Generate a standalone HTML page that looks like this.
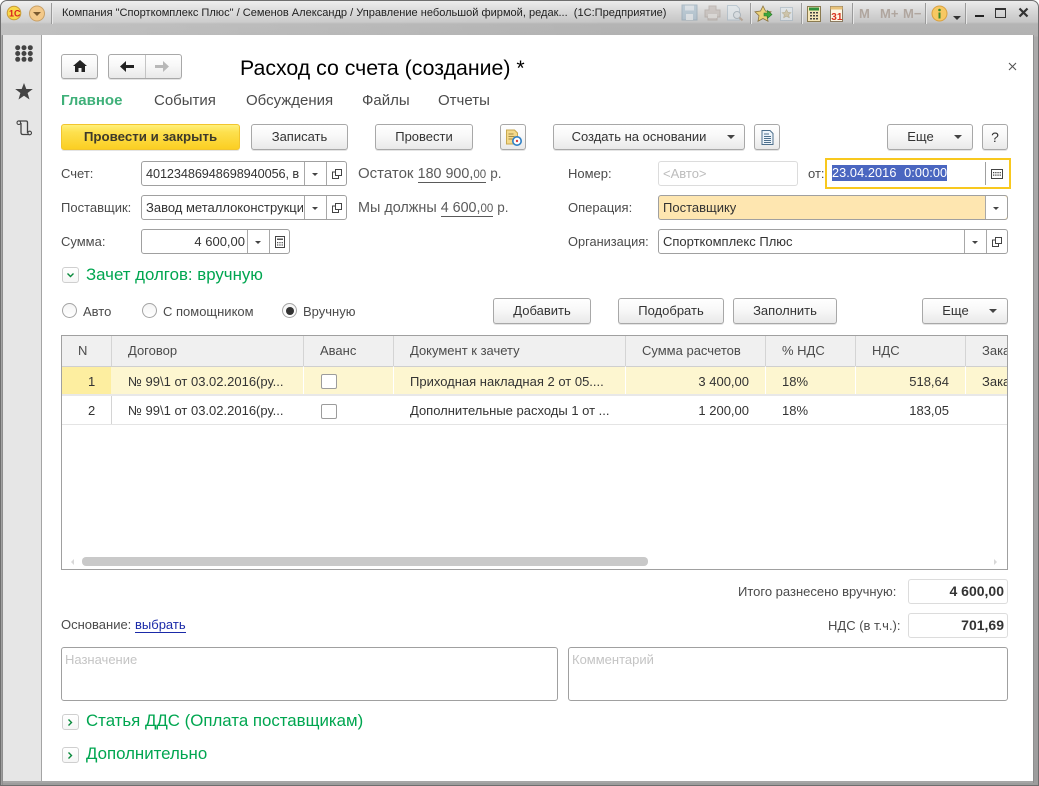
<!DOCTYPE html>
<html lang="ru"><head><meta charset="utf-8"><title>Расход со счета (создание)</title>
<style>
html,body{margin:0;padding:0;background:#fff}
body{width:1039px;height:786px;position:relative;overflow:hidden;font-family:"Liberation Sans",Arial,sans-serif;font-size:13px;color:#333}
div,span.a,a.a{position:absolute;box-sizing:border-box}
svg{position:absolute;overflow:visible}
.t{white-space:nowrap;height:20px;line-height:20px}
.l{color:#4b4b4b}
.b{border:1px solid #a8a8a8;border-radius:3px;background:linear-gradient(#fff 0%,#f8f8f8 45%,#e9e9e9 100%);text-align:center;color:#333;line-height:24px;white-space:nowrap;box-shadow:0 1px 0 #e4e4e4}
.f{border:1px solid #a0a0a0;border-radius:3px;background:#fff;height:25px}
.d{width:1px;top:0;bottom:0;background:#a8a8a8}
.arr{width:0;height:0;border-left:3px solid transparent;border-right:3px solid transparent;border-top:3px solid #444}
.arr2{width:0;height:0;border-left:4px solid transparent;border-right:4px solid transparent;border-top:4px solid #444}
.v{left:4px;top:2px;line-height:20px;white-space:nowrap;overflow:hidden;color:#333}
.g{color:#00a650;font-size:16.850px;height:22px;line-height:22px;white-space:nowrap}
.ex{left:62px;width:17px;height:16px;border:1px solid #cfcfcf;border-radius:3px;background:linear-gradient(#fff,#f6f6f6)}
.r{width:15px;height:15px;border:1px solid #a4a4a4;border-radius:50%;background:linear-gradient(#f4f4f4,#fff)}
.th{top:336px;height:30px;line-height:30px;color:#4b4b4b;white-space:nowrap}
.td{height:20px;line-height:20px;white-space:nowrap;color:#333}
.s{width:1px;background:#d4d4d4}
.cb{width:16px;height:15px;border:1px solid #9c9c9c;border-radius:2px;background:#fff}
.mt{color:#b0a69f;font-weight:bold;font-size:13px;top:5px;height:18px;line-height:18px;white-space:nowrap}
.sp{width:1px;height:21px;top:3px;background:#9a9a9a;box-shadow:1px 0 0 #e8e8e8}
.tb{top:91px;font-size:15px;color:#4b4b4b}
</style></head><body>
<svg width="0" height="0" style="position:absolute"><defs>
<symbol id="open" viewBox="0 0 12 12"><path d="M4.500 1.500h6v6h-6zM4.500 4H1.500v6.500h6V7.500" fill="none" stroke="#444" stroke-width="1"/></symbol>
<symbol id="calc" viewBox="0 0 12 12"><path d="M1.500 .5h9v11h-9z" fill="#fff" stroke="#444"/><path d="M3 2.500h6v1.500H3z" fill="#555"/><path d="M3 6h1.300v1.200H3zM5.300 6h1.300v1.200H5.300zM7.600 6h1.300v1.200H7.600zM3 8.400h1.300v1.200H3zM5.300 8.400h1.300v1.200H5.300zM7.600 8.400h1.300v1.200H7.600z" fill="#555"/></symbol>
</defs></svg>

<!-- window frame -->
<div style="left:0;top:0;width:1039px;height:786px;border:1px solid #6e6e6e;border-radius:7px 7px 0 0;background:linear-gradient(#ececec 0,#d8d8d8 10px,#c6c6c6 21px,#b4b4b4 23px,#b2b2b2 35px,#aaa 36px,#9d9d9d 100%)"></div>
<div style="left:1px;top:1px;width:1037px;height:34px;border-radius:6px 6px 0 0;background:linear-gradient(90deg,rgba(255,255,255,.18),rgba(255,255,255,0) 60%)"></div>
<div style="left:3px;top:35px;width:38px;height:746px;background:#e6e6e6"></div>
<div style="left:41px;top:35px;width:1px;height:746px;background:#a4a4a4"></div>
<div style="left:42px;top:35px;width:991px;height:746px;background:#fff"></div>
<div style="left:3px;top:781px;width:1030px;height:2px;background:#a6a6a6"></div>
<div style="left:2px;top:35px;width:1px;height:750px;background:#8e8e8e"></div>
<div style="left:1033px;top:35px;width:1px;height:748px;background:#8e8e8e"></div>

<!-- title bar -->
<svg style="left:7px;top:3px" width="22" height="22" viewBox="0 0 22 22"><circle cx="7" cy="10" r="6.800" fill="#f8d84a" stroke="#c79a3a"/><text x="2" y="13.500" font-family="Liberation Sans" font-weight="bold" font-size="9" fill="#d82020">1С</text></svg>
<svg style="left:29px;top:6px" width="18" height="18" viewBox="0 0 18 18"><circle cx="8" cy="7.500" r="7.500" fill="#f3c98a" stroke="#c8a066"/><path d="M4 6h8L8 10z" fill="#7a5a30"/></svg>
<div class="sp" style="left:51px"></div>
<div class="t" style="left:62px;top:3px;font-size:11.060px;color:#222">Компания "Спорткомплекс Плюс" / Семенов Александр / Управление небольшой фирмой, редак...&nbsp; (1С:Предприятие)</div>

<svg style="left:680px;top:3px" width="170" height="19" viewBox="0 0 170 19">
<g opacity=".55">
<path d="M2 2h15v15H2z" fill="#9fb9cc" stroke="#7e98ac"/><path d="M5 2.500h9v5H5z" fill="#d8e2ea"/><path d="M6 11h7v6H6z" fill="#e4ebf0"/>
<path d="M25 7h4V3h7v4h4v7h-3v3H28v-3h-3z" fill="#c0b6b0" stroke="#a49890"/><path d="M28 11h9v4h-9z" fill="#e0dcd8"/>
<path d="M47.500 2.500h9l3 3V17h-12z" fill="#e4ecf2" stroke="#9fb4c4"/><circle cx="57" cy="12" r="3.500" fill="#dce4ea" stroke="#8a9aa6"/><path d="M59.500 14.500l3 3" stroke="#a58a70" stroke-width="2"/>
<path d="M100.500 4.500h12v13h-12z" fill="#e4ecf2" stroke="#a0b2c0"/><path d="M106.500 6.500l1.400 2.800 3 .4-2.200 2 .6 3-2.800-1.500-2.800 1.500.6-3-2.200-2 3-.4z" fill="#c8b88a" stroke="#a09060" stroke-width=".6"/>
</g>
<path d="M83 3l2.500 5 5.500.8-4 3.900 1 5.500-5-2.700-5 2.700 1-5.500-4-3.900 5.500-.8z" fill="#ecd27a" stroke="#8a7440" stroke-width=".8"/>
<path d="M84 10h3.500V7.500l4.500 4-4.500 4V13H84z" fill="#3fa83c" stroke="#2a7a2a" stroke-width=".6"/>
<path d="M127.500 3.500h13v15h-13z" fill="#f5e6b8" stroke="#8a7a50"/><path d="M129 4.500h10v3h-10z" fill="#2f8f3a"/><path d="M130 9h2v1.500h-2zM133 9h2v1.500h-2zM136 9h2v1.500h-2zM130 12h2v1.500h-2zM133 12h2v1.500h-2zM136 12h2v1.500h-2zM130 15h2v1.500h-2zM133 15h2v1.500h-2zM136 15h2v1.500h-2z" fill="#444"/>
<path d="M150.500 3.500h12v15h-12z" fill="#fdf6e4" stroke="#8a7a60"/><path d="M150.500 3.500h12v3h-12z" fill="#e8c27a"/><text x="151.300" y="17" font-family="Liberation Sans" font-size="10" font-weight="bold" fill="#d8321e">31</text>
</svg>
<div class="sp" style="left:750px"></div>
<div class="sp" style="left:801px"></div>
<div class="sp" style="left:852px"></div>
<div class="sp" style="left:925px"></div>
<div class="sp" style="left:965px"></div>
<div class="mt" style="left:859px">M</div>
<div class="mt" style="left:880px">M+</div>
<div class="mt" style="left:903px">M−</div>
<svg style="left:931px;top:5px" width="18" height="18" viewBox="0 0 18 18"><circle cx="8.500" cy="8.500" r="7.500" fill="#f7c862" stroke="#d8a040"/><circle cx="8.500" cy="5" r="1.300" fill="#3c8a2a"/><path d="M7.500 7.500h2v6h-2z" fill="#3c8a2a"/></svg>
<div style="left:953px;top:16px;width:0;height:0;border-left:4px solid transparent;border-right:4px solid transparent;border-top:4px solid #333"></div>
<div style="left:975px;top:15px;width:9px;height:2px;background:#222"></div>
<div style="left:995px;top:8px;width:11px;height:10px;border:1px solid #333;border-top-width:2px"></div>
<svg style="left:1018px;top:7px" width="12" height="12" viewBox="0 0 12 12"><path d="M1.500 1.500l8 8M9.500 1.500l-8 8" stroke="#333" stroke-width="2.200"/></svg>

<!-- sidebar -->
<svg style="left:15px;top:45px" width="18" height="17" viewBox="0 0 18 17" fill="#444"><circle cx="2.700" cy="2.700" r="2.500"/><circle cx="9" cy="2.700" r="2.500"/><circle cx="15.300" cy="2.700" r="2.500"/><circle cx="2.700" cy="8.500" r="2.500"/><circle cx="9" cy="8.500" r="2.500"/><circle cx="15.300" cy="8.500" r="2.500"/><circle cx="2.700" cy="14.300" r="2.500"/><circle cx="9" cy="14.300" r="2.500"/><circle cx="15.300" cy="14.300" r="2.500"/></svg>
<svg style="left:15px;top:83px" width="18" height="17" viewBox="0 0 18 17"><path d="M9 0l2.300 6h6.500l-5.200 4 1.900 6.500L9 12.700 3.500 16.500 5.400 10 .2 6h6.500z" fill="#444"/></svg>
<svg style="left:16px;top:119px" width="17" height="17" viewBox="0 0 17 17"><path d="M2.500 2h7.500c1 0 1.500.5 1.500 1.500V14" fill="none" stroke="#444" stroke-width="1.300"/><path d="M5 4v9.500c0 1.200.8 2 2 2h6.500" fill="none" stroke="#444" stroke-width="1.300"/><circle cx="2.800" cy="3.700" r="1.800" fill="#e6e6e6" stroke="#444" stroke-width="1.100"/><circle cx="13.700" cy="14" r="1.800" fill="#e6e6e6" stroke="#444" stroke-width="1.100"/></svg>

<!-- top nav -->
<div class="b" style="left:61px;top:54px;width:37px;height:25px"></div>
<svg style="left:73px;top:60px" width="14" height="12" viewBox="0 0 14 12"><path d="M7 0L0 6h2v6h3.500V8h3v4H12V6h2z" fill="#222"/></svg>
<div class="b" style="left:108px;top:54px;width:74px;height:25px"></div>
<div style="left:145px;top:55px;width:1px;height:23px;background:#c4c4c4"></div>
<svg style="left:120px;top:61px" width="14" height="11" viewBox="0 0 14 11"><path d="M0 5.500L6 0v4h8v3H6v4z" fill="#222"/></svg>
<svg style="left:155px;top:61px" width="14" height="11" viewBox="0 0 14 11"><path d="M14 5.500L8 0v4H0v3h8v4z" fill="#b8b8b8"/></svg>
<div class="t" style="left:240px;top:56px;font-size:21.300px;height:24px;line-height:24px;color:#000">Расход со счета (создание) *</div>
<svg style="left:1008px;top:62px" width="9" height="9" viewBox="0 0 9 9"><path d="M1 1l7 7M8 1L1 8" stroke="#555" stroke-width="1.100"/></svg>

<!-- tabs -->
<div class="t tb" style="left:61px;font-weight:bold;color:#3fb079">Главное</div>
<div class="t tb" style="left:154px">События</div>
<div class="t tb" style="left:246px">Обсуждения</div>
<div class="t tb" style="left:362px">Файлы</div>
<div class="t tb" style="left:438px">Отчеты</div>

<!-- command bar -->
<div class="b" style="left:61px;top:124px;width:179px;height:26px;background:linear-gradient(#fff07a 0,#fde04e 30%,#fbcf22 100%);border-color:#f2c52e;font-weight:bold;font-size:13.300px;color:#3d3a2a">Провести и закрыть</div>
<div class="b" style="left:251px;top:124px;width:97px;height:26px">Записать</div>
<div class="b" style="left:375px;top:124px;width:98px;height:26px">Провести</div>
<div class="b" style="left:500px;top:124px;width:26px;height:26px"></div>
<svg style="left:505px;top:129px" width="17" height="17" viewBox="0 0 17 17"><path d="M1.500 1h8l3 3v11h-11z" fill="#f4d98a" stroke="#c8a850"/><path d="M3.500 5h5M3.500 7.500h6M3.500 10h4" stroke="#a58a45"/><circle cx="12" cy="12" r="4.200" fill="#fff" stroke="#2f7fc4" stroke-width="1.600"/><circle cx="12" cy="12" r="1.200" fill="#d84040"/></svg>
<div class="b" style="left:553px;top:124px;width:192px;height:26px;padding-right:20px">Создать на основании</div>
<div class="arr2" style="left:727px;top:135px"></div>
<div class="b" style="left:754px;top:124px;width:26px;height:26px"></div>
<svg style="left:761px;top:130px" width="13" height="15" viewBox="0 0 13 15"><path d="M1 .5h8l3 3v11H1z" fill="#eef5fb" stroke="#4d6f8c"/><path d="M3 4h5M3 6.500h7M3 8.500h7M3 10.500h7M3 12.500h7" stroke="#4d6f8c"/></svg>
<div class="b" style="left:887px;top:124px;width:86px;height:26px;padding-right:19px">Еще</div>
<div class="arr2" style="left:954px;top:135px"></div>
<div class="b" style="left:982px;top:124px;width:26px;height:26px;font-size:14px">?</div>

<!-- left fields -->
<div class="t l" style="left:61px;top:164px">Счет:</div>
<div class="f" style="left:141px;top:161px;width:206px"><div class="v" style="width:158px;font-size:12.700px;letter-spacing:-.08px">40123486948698940056, в</div><div class="d" style="left:162px"></div><div class="arr" style="left:170px;top:11px"></div><div class="d" style="left:184px"></div><svg style="left:189px;top:6px" width="12" height="12"><use href="#open"/></svg></div>
<div class="t" style="left:358px;top:164px;font-size:15px;color:#5a5a5a">Остаток <span style="border-bottom:1px solid #5a5a5a;font-size:14.300px">180 900,<span style="font-size:11.500px">00</span></span> <span style="font-size:13.500px">р.</span></div>
<div class="t l" style="left:61px;top:198px">Поставщик:</div>
<div class="f" style="left:141px;top:195px;width:206px"><div class="v" style="width:157px">Завод металлоконструкци</div><div class="d" style="left:162px"></div><div class="arr" style="left:170px;top:11px"></div><div class="d" style="left:184px"></div><svg style="left:189px;top:6px" width="12" height="12"><use href="#open"/></svg></div>
<div class="t" style="left:358px;top:198px;font-size:14.400px;color:#5a5a5a">Мы должны <span style="border-bottom:1px solid #5a5a5a;font-size:14.300px">4 600,<span style="font-size:11.500px">00</span></span> <span style="font-size:13.500px">р.</span></div>
<div class="t l" style="left:61px;top:232px">Сумма:</div>
<div class="f" style="left:141px;top:229px;width:149px"><div class="v" style="left:0;width:103px;text-align:right">4 600,00</div><div class="d" style="left:105px"></div><div class="arr" style="left:113px;top:11px"></div><div class="d" style="left:127px"></div><svg style="left:132px;top:6px" width="12" height="12"><use href="#calc"/></svg></div>

<!-- right fields -->
<div class="t l" style="left:568px;top:164px">Номер:</div>
<div class="f" style="left:658px;top:161px;width:140px;border-color:#dcdcdc"><div class="v" style="color:#bcbcbc">&lt;Авто&gt;</div></div>
<div class="t l" style="left:808px;top:164px">от:</div>
<div style="left:825px;top:158px;width:186px;height:31px;border:2px solid #f8c81e;background:#fff"></div>
<div style="left:832px;top:165px;width:115px;height:16px;background:#4a66c0"></div>
<div class="t" style="left:832px;top:163px;color:#fff;font-size:12.700px;word-spacing:.2px;letter-spacing:.1px">23.04.2016&nbsp; 0:00:00</div>
<div style="left:985px;top:162px;width:1px;height:23px;background:#a0a0a0"></div>
<svg style="left:991px;top:169px" width="12" height="10" viewBox="0 0 12 10"><path d="M.5.500h11v9H.5z" fill="#fff" stroke="#444"/><path d="M2 3h1.300v1.200H2zM4.200 3h1.300v1.200H4.200zM6.400 3h1.300v1.200H6.400zM8.600 3h1.300v1.200H8.600zM2 5.500h1.300v1.200H2zM4.200 5.500h1.300v1.200H4.200zM6.400 5.500h1.300v1.200H6.400zM8.600 5.500h1.300v1.200H8.600z" fill="#444"/></svg>
<div class="t l" style="left:568px;top:198px">Операция:</div>
<div class="f" style="left:658px;top:195px;width:350px;background:#fee6b0"><div class="v">Поставщику</div><div class="d" style="left:326px"></div><div style="left:327px;top:0;right:0;bottom:0;background:#fff;border-radius:0 3px 3px 0"></div><div class="arr" style="left:334px;top:11px"></div></div>
<div class="t l" style="left:568px;top:232px;font-size:12.800px">Организация:</div>
<div class="f" style="left:658px;top:229px;width:350px"><div class="v">Спорткомплекс Плюс</div><div class="d" style="left:305px"></div><div class="arr" style="left:313px;top:11px"></div><div class="d" style="left:327px"></div><svg style="left:332px;top:6px" width="12" height="12"><use href="#open"/></svg></div>

<!-- group -->
<div class="ex" style="top:267px"></div>
<svg style="left:66px;top:272px" width="9" height="7" viewBox="0 0 9 7"><path d="M1.500 1.500L4.500 4.500 7.500 1.500" fill="none" stroke="#0a8a3c" stroke-width="1.400"/></svg>
<div class="g" style="left:86px;top:264px">Зачет долгов: вручную</div>

<div class="r" style="left:62px;top:303px"></div><div class="t l" style="left:83px;top:302px">Авто</div>
<div class="r" style="left:142px;top:303px"></div><div class="t l" style="left:163px;top:302px">С помощником</div>
<div class="r" style="left:282px;top:303px"></div><div style="left:285.500px;top:306.500px;width:8px;height:8px;border-radius:50%;background:#333"></div><div class="t l" style="left:303px;top:302px">Вручную</div>

<div class="b" style="left:493px;top:298px;width:98px;height:26px">Добавить</div>
<div class="b" style="left:618px;top:298px;width:106px;height:26px">Подобрать</div>
<div class="b" style="left:733px;top:298px;width:104px;height:26px">Заполнить</div>
<div class="b" style="left:922px;top:298px;width:86px;height:26px;padding-right:19px">Еще</div>
<div class="arr2" style="left:989px;top:309px"></div>

<!-- table -->
<div style="left:61px;top:335px;width:947px;height:235px;border:1px solid #a0a0a0;background:#fff"></div>
<div style="left:62px;top:336px;width:945px;height:30px;background:#f0f0f0"></div>
<div style="left:62px;top:366px;width:945px;height:1px;background:#cfcfcf"></div>
<div style="left:62px;top:367px;width:945px;height:27px;background:#fdf6d0"></div>
<div style="left:62px;top:367px;width:49px;height:27px;background:#fdeea0"></div>
<div style="left:62px;top:394px;width:945px;height:2px;background:#e8e8e8"></div>
<div style="left:62px;top:424px;width:945px;height:1px;background:#e4e4e4"></div>
<div class="s" style="left:111px;top:336px;height:30px"></div>
<div style="left:111px;top:396px;width:1px;height:28px;background:#d4d4d4"></div>
<div style="left:303px;top:336px;width:1px;height:58px;background:linear-gradient(#d4d4d4 0,#d4d4d4 30px,#fff 31px)"></div>
<div style="left:393px;top:336px;width:1px;height:58px;background:linear-gradient(#d4d4d4 0,#d4d4d4 30px,#fff 31px)"></div>
<div style="left:625px;top:336px;width:1px;height:58px;background:linear-gradient(#d4d4d4 0,#d4d4d4 30px,#fff 31px)"></div>
<div style="left:765px;top:336px;width:1px;height:58px;background:linear-gradient(#d4d4d4 0,#d4d4d4 30px,#fff 31px)"></div>
<div style="left:855px;top:336px;width:1px;height:58px;background:linear-gradient(#d4d4d4 0,#d4d4d4 30px,#fff 31px)"></div>
<div style="left:965px;top:336px;width:1px;height:58px;background:linear-gradient(#d4d4d4 0,#d4d4d4 30px,#fff 31px)"></div>

<div class="th" style="left:78px">N</div>
<div class="th" style="left:128px">Договор</div>
<div class="th" style="left:320px">Аванс</div>
<div class="th" style="left:410px">Документ к зачету</div>
<div class="th" style="left:642px">Сумма расчетов</div>
<div class="th" style="left:782px">% НДС</div>
<div class="th" style="left:872px">НДС</div>
<div class="th" style="left:982px;width:25px;overflow:hidden">Заказ</div>

<div class="td" style="left:88px;top:372px">1</div>
<div class="td" style="left:128px;top:372px">№ 99\1 от 03.02.2016(ру...</div>
<div class="cb" style="left:321px;top:374px"></div>
<div class="td" style="left:410px;top:372px">Приходная накладная 2 от 05....</div>
<div class="td" style="left:640px;top:372px;width:109px;text-align:right">3 400,00</div>
<div class="td" style="left:782px;top:372px">18%</div>
<div class="td" style="left:870px;top:372px;width:79px;text-align:right">518,64</div>
<div class="td" style="left:982px;top:372px;width:25px;overflow:hidden">Заказ</div>

<div class="td" style="left:88px;top:401px">2</div>
<div class="td" style="left:128px;top:401px">№ 99\1 от 03.02.2016(ру...</div>
<div class="cb" style="left:321px;top:404px"></div>
<div class="td" style="left:410px;top:401px">Дополнительные расходы 1 от ...</div>
<div class="td" style="left:640px;top:401px;width:109px;text-align:right">1 200,00</div>
<div class="td" style="left:782px;top:401px">18%</div>
<div class="td" style="left:870px;top:401px;width:79px;text-align:right">183,05</div>

<div style="left:82px;top:557px;width:566px;height:9px;border-radius:4px;background:#c9c9c9"></div>
<div style="left:71px;top:559px;width:0;height:0;border-top:3px solid transparent;border-bottom:3px solid transparent;border-right:3px solid #d8d8d8"></div>
<div style="left:994px;top:559px;width:0;height:0;border-top:3px solid transparent;border-bottom:3px solid transparent;border-left:3px solid #d8d8d8"></div>

<!-- totals -->
<div class="t l" style="left:738px;top:582px">Итого разнесено вручную:</div>
<div class="f" style="left:908px;top:579px;width:100px;border-color:#dcdcdc;font-weight:bold;font-size:14px;text-align:right;line-height:23px;padding-right:3px">4 600,00</div>
<div class="t l" style="left:828px;top:616px">НДС (в т.ч.):</div>
<div class="f" style="left:908px;top:613px;width:100px;border-color:#dcdcdc;font-weight:bold;font-size:14px;text-align:right;line-height:23px;padding-right:3px">701,69</div>
<div class="t l" style="left:61px;top:615px">Основание:</div>
<a class="a t" href="#" style="position:absolute;left:135px;top:615px;color:#1a2aa8;text-decoration:none;border-bottom:1px solid #1a2aa8;height:18px;line-height:20px">выбрать</a>

<div class="f" style="left:61px;top:647px;width:497px;height:54px"><div class="v" style="left:3px;top:2px;color:#c4c4c4">Назначение</div></div>
<div class="f" style="left:568px;top:647px;width:440px;height:54px"><div class="v" style="left:3px;top:2px;color:#c4c4c4">Комментарий</div></div>

<div class="ex" style="top:714px"></div>
<svg style="left:67px;top:718px" width="7" height="9" viewBox="0 0 7 9"><path d="M1.500 1.500L4.500 4.500 1.500 7.500" fill="none" stroke="#0a8a3c" stroke-width="1.400"/></svg>
<div class="g" style="left:86px;top:710px">Статья ДДС (Оплата поставщикам)</div>
<div class="ex" style="top:747px"></div>
<svg style="left:67px;top:751px" width="7" height="9" viewBox="0 0 7 9"><path d="M1.500 1.500L4.500 4.500 1.500 7.500" fill="none" stroke="#0a8a3c" stroke-width="1.400"/></svg>
<div class="g" style="left:86px;top:743px">Дополнительно</div>
</body></html>
